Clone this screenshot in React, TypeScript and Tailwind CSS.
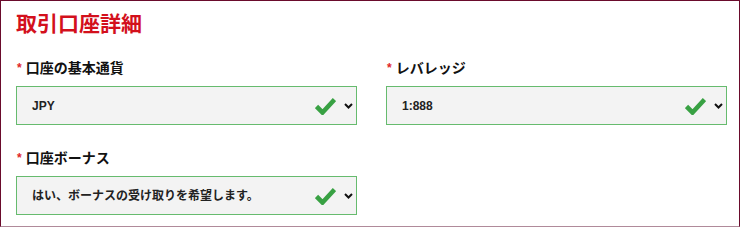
const fields = [
  { label: "口座の基本通貨", value: "JPY" },
  { label: "レバレッジ", value: "1:888" },
  { label: "口座ボーナス", value: "はい、ボーナスの受け取りを希望します。" },
];

function Check() {
  return (
    <svg width="21" height="18" viewBox="0 0 21 18" className="shrink-0">
      <path d="M1.5 9.5 L7.5 15.5 L19.5 2.5" fill="none" stroke="#38a143" strokeWidth="4.6" />
    </svg>
  );
}

function Chevron() {
  return (
    <svg width="9" height="6" viewBox="0 0 9 6" className="shrink-0">
      <path d="M1 1 L4.5 4.5 L8 1" fill="none" stroke="#111" strokeWidth="2" />
    </svg>
  );
}

function SelectField({ label, value }: { label: string; value: string }) {
  return (
    <div className="flex flex-col">
      <div className="flex h-5 items-center gap-[4px] pl-px text-[14px] font-bold text-[#111]">
        <span className="text-[12px] text-[#e0262a]">*</span>
        <span>{label}</span>
      </div>
      <div className="mt-2 flex h-[39px] items-center border border-[#66bb6e] bg-[#f3f3f3] pl-[15px] pr-[3px]">
        <span className="flex-1 text-[12px] font-semibold text-[#222]">{value}</span>
        <Check />
        <span className="ml-[8px]">
          <Chevron />
        </span>
      </div>
    </div>
  );
}

export default function App() {
  return (
    <div
      className="h-[227px] w-[740px] border border-b-[#b08a9a] border-[#6a0b2c] bg-white"
      style={{ fontFamily: '"Liberation Sans", "Noto Sans CJK JP", sans-serif' }}
    >
      <h1 className="mt-[9px] pl-[15px] text-[21px] font-bold leading-[28px] text-[#d3101c]">取引口座詳細</h1>
      <div className="mt-5 grid grid-cols-2 gap-x-[29px] gap-y-[23px] pl-[15px] pr-[12px]">
        {fields.map((f) => (
          <SelectField key={f.label} label={f.label} value={f.value} />
        ))}
      </div>
    </div>
  );
}
